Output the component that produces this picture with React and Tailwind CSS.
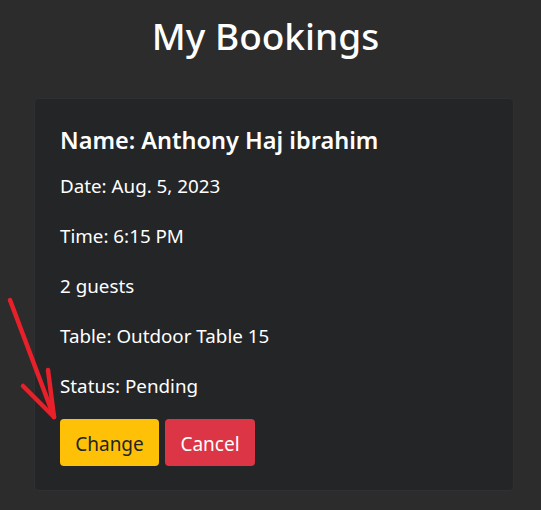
// Bookings list page with a single booking card
const booking = {
    name: 'Anthony Haj ibrahim',
    date: 'Aug. 5, 2023',
    time: '6:15 PM',
    guests: 2,
    table: 'Outdoor Table 15',
    status: 'Pending',
};

const font = { fontFamily: '"Noto Sans", "Open Sans", sans-serif' };

// Hand-drawn red annotation arrow that sits over the page
const Arrow = () => (
    <svg className="absolute left-0 top-0 pointer-events-none" width="80" height="430" viewBox="0 0 80 430">
        <g stroke="#e8202a" strokeWidth="4.5" strokeLinecap="round" fill="none">
            <path d="M10 300 L54 417" />
            <path d="M23 386 L54 417" />
            <path d="M48 370 L54 417" />
        </g>
    </svg>
);

const App = () => {
    return (
        <div className="relative min-h-[510px] bg-[#2c2c2c] text-white" style={font}>
            <h1 className="pt-[12px] pr-[10px] text-center text-[37px] leading-[48px] font-medium">My Bookings</h1>

            <div className="ml-[34px] mt-[38px] w-[480px] rounded-[5px] border border-[#2f3033] bg-[#242527] px-[25px] pt-[27px] pb-[24px]">
                <h4 className="text-[23.5px] leading-[29px] font-semibold">Name: {booking.name}</h4>
                <div className="mt-[19px] flex flex-col gap-[26px] text-[18.8px] leading-[24px]">
                    <p>Date: {booking.date}</p>
                    <p>Time: {booking.time}</p>
                    <p>{booking.guests} guests</p>
                    <p>Table: {booking.table}</p>
                    <p>Status: {booking.status}</p>
                </div>
                <div className="mt-[21px] flex gap-[6px]">
                    <button className="h-[47px] w-[99px] rounded-[4px] bg-[#ffc107] pt-[3px] text-[19px] text-[#212529]">
                        Change
                    </button>
                    <button className="h-[47px] w-[90px] rounded-[4px] bg-[#dc3545] pt-[3px] text-[19px] text-white">
                        Cancel
                    </button>
                </div>
            </div>

            <Arrow />
        </div>
    );
};

export default App;
